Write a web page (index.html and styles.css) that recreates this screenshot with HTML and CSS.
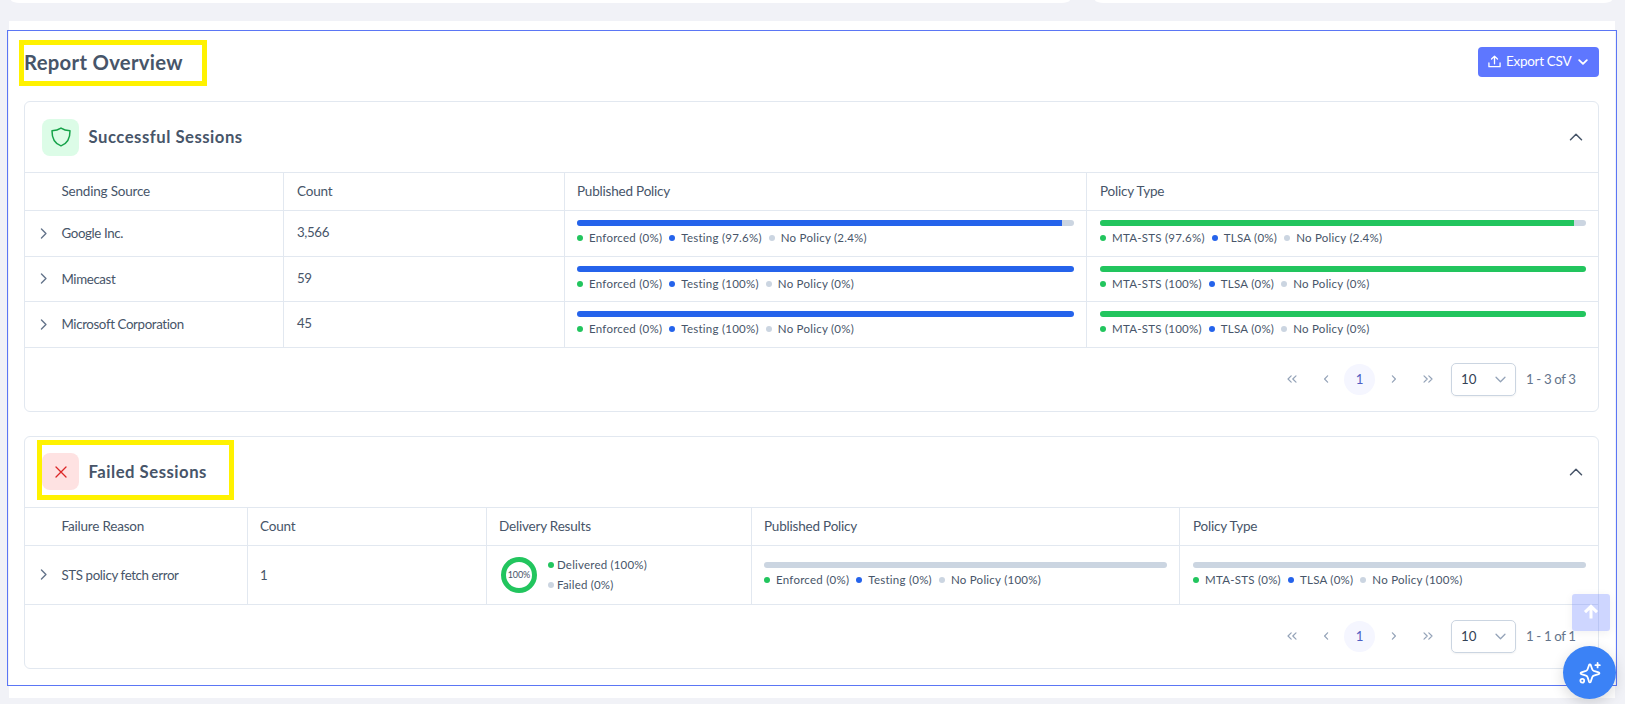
FILE: index.html
```html
<!DOCTYPE html>
<html lang="en">
<head>
    <meta charset="UTF-8">
    <meta name="viewport" content="width=device-width, initial-scale=1.0">
    <title>Report Overview</title>
    <link rel="stylesheet" href="styles.css">
</head>
<body>
    <svg class="sprite" aria-hidden="true">
        <symbol id="chevron" viewBox="0 0 16 16"><path d="M5.5 2.5 L11 8 L5.5 13.5"/></symbol>
        <symbol id="chevron-up" viewBox="0 0 16 16"><path d="M2.5 10.8 L8 5.3 L13.5 10.8"/></symbol>
        <symbol id="chevron-down" viewBox="0 0 16 16"><path d="M2.5 5.2 L8 10.7 L13.5 5.2"/></symbol>
        <symbol id="angle-left" viewBox="0 0 10 10"><path d="M6.6 1.8 L3.6 5 L6.6 8.2"/></symbol>
        <symbol id="angle-right" viewBox="0 0 10 10"><path d="M3.4 1.8 L6.4 5 L3.4 8.2"/></symbol>
        <symbol id="angles-left" viewBox="0 0 10 10"><path d="M4.2 1.8 L1 5 L4.2 8.2 M9 1.8 L5.8 5 L9 8.2"/></symbol>
        <symbol id="angles-right" viewBox="0 0 10 10"><path d="M1 1.8 L4.2 5 L1 8.2 M5.8 1.8 L9 5 L5.8 8.2"/></symbol>
    </svg>

    <div class="top-cards">
        <div class="top-card"></div>
        <div class="top-card"></div>
    </div>

    <main class="panel">
        <div class="report">
            <div class="report-header">
                <h1 class="marked">Report Overview</h1>
                <button class="export-btn">
                    <svg class="export-icon" viewBox="0 0 14 14"><path d="M7 9.5 V1.5 M3.8 4.3 L7 1.3 L10.2 4.3 M1 8.6 V12.6 H13 V8.6"/></svg>
                    <span>Export CSV</span>
                    <svg class="export-caret" viewBox="0 0 10 10"><path d="M1.2 3.2 L5 6.9 L8.8 3.2"/></svg>
                </button>
            </div>

            <section class="card">
                <div class="card-header">
                    <div class="card-title">
                        <span class="badge badge-success">
                            <svg viewBox="0 0 20 20"><path d="M10 1.1 C7.4 2.8 4.2 3.6 1 3.8 C0.9 10.5 3.4 16.6 10 18.9 C16.6 16.6 19.1 10.5 19 3.8 C15.8 3.6 12.6 2.8 10 1.1 Z"/></svg>
                        </span>
                        <h2>Successful Sessions</h2>
                    </div>
                    <svg class="collapse"><use href="#chevron-up"/></svg>
                </div>

                <div class="table table-success">
                    <div class="row head">
                        <div class="cell first">Sending Source</div>
                        <div class="cell count">Count</div>
                        <div class="cell">Published Policy</div>
                        <div class="cell">Policy Type</div>
                    </div>
                    <div class="row">
                        <div class="cell first"><svg class="expand"><use href="#chevron"/></svg>Google Inc.</div>
                        <div class="cell count">3,566</div>
                        <div class="cell policy">
                            <div class="bar"><i class="blue" style="width: 97.6%"></i></div>
                            <div class="legend"><span class="green">Enforced (0%)</span><span class="blue">Testing (97.6%)</span><span class="gray">No Policy (2.4%)</span></div>
                        </div>
                        <div class="cell policy">
                            <div class="bar"><i class="green" style="width: 97.6%"></i></div>
                            <div class="legend"><span class="green">MTA-STS (97.6%)</span><span class="blue">TLSA (0%)</span><span class="gray">No Policy (2.4%)</span></div>
                        </div>
                    </div>
                    <div class="row">
                        <div class="cell first"><svg class="expand"><use href="#chevron"/></svg>Mimecast</div>
                        <div class="cell count">59</div>
                        <div class="cell policy">
                            <div class="bar"><i class="blue" style="width: 100%"></i></div>
                            <div class="legend"><span class="green">Enforced (0%)</span><span class="blue">Testing (100%)</span><span class="gray">No Policy (0%)</span></div>
                        </div>
                        <div class="cell policy">
                            <div class="bar"><i class="green" style="width: 100%"></i></div>
                            <div class="legend"><span class="green">MTA-STS (100%)</span><span class="blue">TLSA (0%)</span><span class="gray">No Policy (0%)</span></div>
                        </div>
                    </div>
                    <div class="row">
                        <div class="cell first"><svg class="expand"><use href="#chevron"/></svg>Microsoft Corporation</div>
                        <div class="cell count">45</div>
                        <div class="cell policy">
                            <div class="bar"><i class="blue" style="width: 100%"></i></div>
                            <div class="legend"><span class="green">Enforced (0%)</span><span class="blue">Testing (100%)</span><span class="gray">No Policy (0%)</span></div>
                        </div>
                        <div class="cell policy">
                            <div class="bar"><i class="green" style="width: 100%"></i></div>
                            <div class="legend"><span class="green">MTA-STS (100%)</span><span class="blue">TLSA (0%)</span><span class="gray">No Policy (0%)</span></div>
                        </div>
                    </div>
                </div>

                <div class="pager">
                    <span class="page"><svg><use href="#angles-left"/></svg></span>
                    <span class="page"><svg><use href="#angle-left"/></svg></span>
                    <span class="page current">1</span>
                    <span class="page"><svg><use href="#angle-right"/></svg></span>
                    <span class="page"><svg><use href="#angles-right"/></svg></span>
                    <div class="page-size">10<svg><use href="#chevron-down"/></svg></div>
                    <span class="range">1 - 3 of 3</span>
                </div>
            </section>

            <section class="card">
                <div class="card-header">
                    <div class="card-title marked">
                        <span class="badge badge-failed">
                            <svg viewBox="0 0 20 20"><path d="M5 5 L15 15 M15 5 L5 15"/></svg>
                        </span>
                        <h2>Failed Sessions</h2>
                    </div>
                    <svg class="collapse"><use href="#chevron-up"/></svg>
                </div>

                <div class="table table-failed">
                    <div class="row head">
                        <div class="cell first">Failure Reason</div>
                        <div class="cell">Count</div>
                        <div class="cell">Delivery Results</div>
                        <div class="cell">Published Policy</div>
                        <div class="cell">Policy Type</div>
                    </div>
                    <div class="row">
                        <div class="cell first"><svg class="expand"><use href="#chevron"/></svg>STS policy fetch error</div>
                        <div class="cell">1</div>
                        <div class="cell delivery">
                            <div class="ring">100%</div>
                            <div class="ring-legend"><span class="green">Delivered (100%)</span><span class="gray">Failed (0%)</span></div>
                        </div>
                        <div class="cell policy">
                            <div class="bar"></div>
                            <div class="legend"><span class="green">Enforced (0%)</span><span class="blue">Testing (0%)</span><span class="gray">No Policy (100%)</span></div>
                        </div>
                        <div class="cell policy">
                            <div class="bar"></div>
                            <div class="legend"><span class="green">MTA-STS (0%)</span><span class="blue">TLSA (0%)</span><span class="gray">No Policy (100%)</span></div>
                        </div>
                    </div>
                </div>

                <div class="pager">
                    <span class="page"><svg><use href="#angles-left"/></svg></span>
                    <span class="page"><svg><use href="#angle-left"/></svg></span>
                    <span class="page current">1</span>
                    <span class="page"><svg><use href="#angle-right"/></svg></span>
                    <span class="page"><svg><use href="#angles-right"/></svg></span>
                    <div class="page-size">10<svg><use href="#chevron-down"/></svg></div>
                    <span class="range">1 - 1 of 1</span>
                </div>
            </section>
        </div>
    </main>

    <button class="scroll-top" aria-label="Scroll to top">
        <svg viewBox="0 0 16 16"><path d="M8 14.5 V3 M2 8.2 L8 2.4 L14 8.2"/></svg>
    </button>
    <button class="assistant" aria-label="Assistant">
        <svg viewBox="0 0 24 24"><path d="M11 4.2 C11.4 3.2 12.4 3.2 12.8 4.2 L14.2 8.2 C14.5 9 15 9.5 15.8 9.8 L20.6 11.3 C21.7 11.8 21.7 12.6 20.6 13.1 L15.8 14.6 C15 14.9 14.5 15.4 14.2 16.2 L12.8 20.6 C12.4 21.6 11.4 21.6 11 20.6 L9.6 16.2 C9.3 15.4 8.8 14.9 8 14.6 L3.4 13.1 C2.3 12.6 2.3 11.8 3.4 11.3 L8 9.8 C8.8 9.5 9.3 9 9.6 8.2 Z M19.6 2 V6.4 M17.4 4.2 H21.8"/><circle cx="4.3" cy="19.8" r="1.9"/></svg>
    </button>
</body>
</html>
```
FILE: styles.css
```css
*,
*::before,
*::after {
    margin: 0;
    padding: 0;
    box-sizing: border-box;
}

body {
    font-family: Lato, 'Open Sans', sans-serif;
    font-size: 13.3px;
    letter-spacing: -0.38px;
    color: #475569;
    background: #f1f2f7;
    height: 704px;
    padding: 0 10px 0 9px;
    overflow: hidden;
}

button {
    border: none;
    font-family: inherit;
}

svg {
    fill: none;
    stroke: currentColor;
    stroke-linecap: round;
    stroke-linejoin: round;
    flex-shrink: 0;
}

.sprite {
    display: none;
}

/* Bottom edge of the cards above the report */
.top-cards {
    display: grid;
    grid-template-columns: 1059px 1fr;
    gap: 25px;
    height: 3px;
    margin: 0 3px 18px 2px;
}

.top-card {
    background: white;
    border-radius: 0 0 9px 9px / 0 0 3px 3px;
}

.panel {
    height: 677px;
    background: white;
    padding-top: 9px;
}

.report {
    height: 656px;
    margin: 0 -2px;
    border: 1px solid #5b76f5;
    padding: 16px 17px 0 16px;
}

.report-header {
    display: flex;
    justify-content: space-between;
    height: 54px;
}

h1 {
    font-size: 20.3px;
    font-weight: 700;
    line-height: 30px;
    letter-spacing: 0.3px;
}

.marked {
    position: relative;
}

.marked::after {
    content: "";
    position: absolute;
    border: 5px solid #fff200;
}

h1.marked::after {
    left: -5px;
    top: -7px;
    width: 188px;
    height: 46px;
}

.card-title.marked::after {
    left: -5px;
    top: -13px;
    width: 197px;
    height: 60px;
}

.export-btn {
    display: flex;
    align-items: center;
    width: 121px;
    height: 30px;
    padding: 0 11px 2px 10px;
    background: #5e77ff;
    color: white;
    border-radius: 4px;
    font-size: 13.5px;
    letter-spacing: -0.3px;
}

.export-icon {
    width: 13px;
    height: 13px;
    margin: 1px 5px 0 0;
    stroke-width: 1.4;
}

.export-caret {
    width: 10px;
    height: 10px;
    margin: 2px 0 0 auto;
    stroke-width: 1.8;
}

.card {
    border: 1px solid #e2e8f0;
    border-radius: 6px;
    margin-bottom: 24px;
}

.card-header {
    display: flex;
    align-items: center;
    justify-content: space-between;
    height: 71px;
    padding: 0 14px 0 17px;
    border-bottom: 1px solid #e2e8f0;
}

.card-title {
    display: flex;
    align-items: center;
    gap: 9.5px;
}

h2 {
    font-size: 16.7px;
    font-weight: 700;
    line-height: 20px;
    letter-spacing: 0.5px;
}

.badge {
    display: flex;
    align-items: center;
    justify-content: center;
    width: 37px;
    height: 37px;
    border-radius: 8px;
}

.badge svg {
    width: 20px;
    height: 20px;
    margin-bottom: 1px;
    stroke-width: 1.5;
}

.badge-success {
    background: #dcfce7;
    color: #16a34a;
}

.badge-failed {
    background: #fee2e2;
    color: #dc2626;
}

.badge-failed svg {
    margin-bottom: 0;
    stroke-width: 1.3;
}

.collapse {
    width: 16px;
    height: 16px;
    stroke-width: 1.5;
}

.row {
    display: grid;
    height: 45.5px;
    border-bottom: 1px solid #e2e8f0;
}

.row.head {
    height: 38px;
    font-size: 13.5px;
    letter-spacing: -0.2px;
}

.table-success .row {
    grid-template-columns: 259px 281px 522px 1fr;
}

.table-failed .row {
    grid-template-columns: 223px 239px 265px 428px 1fr;
}

.table-failed .row:not(.head) {
    height: 59px;
}

.cell {
    display: flex;
    align-items: center;
    padding-left: 12px;
    border-right: 1px solid #e2e8f0;
}

.cell:last-child {
    padding-left: 13px;
    border-right: none;
}

.head .cell {
    padding-bottom: 1px;
}

.first {
    padding-left: 11.5px;
}

.head .first {
    padding-left: 36.5px;
}

.expand {
    width: 13px;
    height: 13px;
    margin-right: 12px;
    stroke-width: 1.7;
    color: #64748b;
}

.count {
    padding-left: 13px;
    padding-bottom: 2px;
}

.policy {
    flex-direction: column;
    align-items: stretch;
    justify-content: center;
    padding-right: 12px;
}

.bar {
    height: 6px;
    border-radius: 3px;
    background: #cbd5e1;
    overflow: hidden;
}

.bar i {
    display: block;
    height: 100%;
}

.bar .blue {
    background: #2563eb;
}

.bar .green {
    background: #22c55e;
}

.legend {
    display: flex;
    gap: 7px;
    margin-top: 4px;
    font-size: 11.5px;
    line-height: 16px;
    letter-spacing: 0.25px;
}

.legend span,
.ring-legend span {
    display: flex;
    align-items: center;
}

.legend span::before,
.ring-legend span::before {
    content: "";
    width: 6px;
    height: 6px;
    margin-right: 6px;
    border-radius: 50%;
    background: #cbd5e1;
}

.legend .green::before,
.ring-legend .green::before {
    background: #22c55e;
}

.legend .blue::before {
    background: #2563eb;
}

.delivery {
    gap: 11px;
    padding-left: 14px;
}

.ring {
    width: 36px;
    height: 36px;
    border: 5px solid #22c55e;
    border-radius: 50%;
    display: flex;
    align-items: center;
    justify-content: center;
    font-size: 9px;
    letter-spacing: -0.1px;
}

.ring-legend {
    font-size: 11.5px;
    line-height: 20px;
    letter-spacing: 0.2px;
}

.ring-legend span::before {
    margin-right: 3px;
}

.pager {
    display: flex;
    align-items: center;
    justify-content: flex-end;
    height: 63px;
    padding-right: 22px;
    gap: 3px;
    color: #64748b;
}

.page {
    display: flex;
    align-items: center;
    justify-content: center;
    width: 31px;
    height: 31px;
    border-radius: 50%;
    color: #94a3b8;
}

.page svg {
    width: 10px;
    height: 10px;
    stroke-width: 1.2;
}

.page.current {
    background: #f5f6ff;
    color: #4f5fc4;
}

.page-size {
    display: flex;
    align-items: center;
    justify-content: space-between;
    width: 65px;
    height: 33px;
    margin: 0 7px 0 5px;
    padding: 0 8px 0 9px;
    border: 1px solid #cbd5e1;
    border-radius: 5px;
    color: #334155;
    letter-spacing: 0;
    box-shadow: 0 1px 2px rgba(18, 18, 23, 0.05);
}

.page-size svg {
    width: 13px;
    height: 13px;
    color: #94a3b8;
    stroke-width: 1.6;
}

.range {
    width: 50px;
    white-space: nowrap;
}

.scroll-top {
    position: absolute;
    left: 1572px;
    top: 594px;
    width: 38px;
    height: 37px;
    padding-bottom: 3px;
    border-radius: 3px;
    background: rgba(94, 119, 255, 0.3);
    color: white;
    box-shadow: 0 2px 10px rgba(0, 0, 0, 0.06);
}

.scroll-top svg {
    width: 16px;
    height: 16px;
    stroke-width: 3;
    vertical-align: middle;
    stroke-linecap: butt;
    stroke-linejoin: miter;
}

.assistant {
    position: absolute;
    left: 1563px;
    top: 646px;
    width: 53px;
    height: 53px;
    border-radius: 50%;
    background: #3b82f6;
    color: white;
    box-shadow: 0 4px 14px rgba(0, 0, 0, 0.15);
}

.assistant svg {
    width: 24px;
    height: 24px;
    stroke-width: 1.8;
    vertical-align: middle;
}
```
